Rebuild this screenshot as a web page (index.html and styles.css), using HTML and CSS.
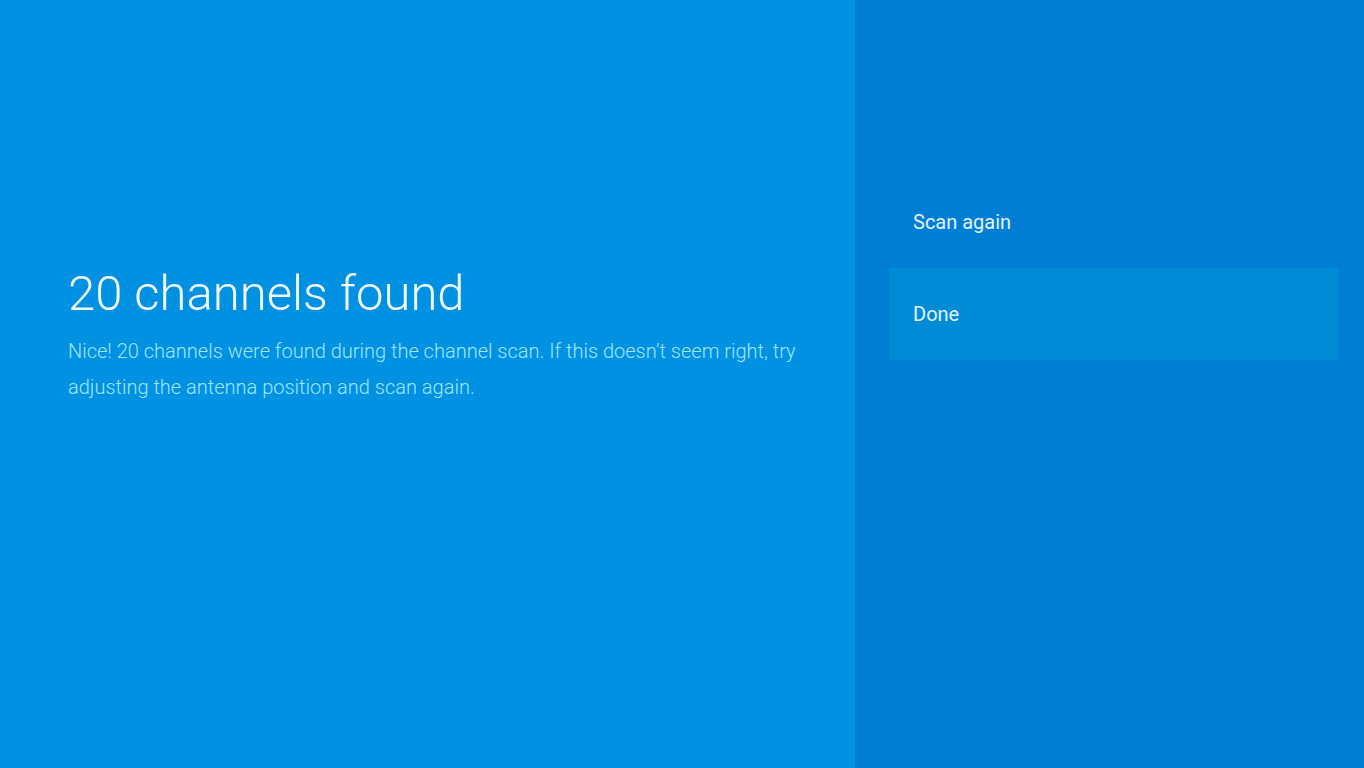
FILE: index.html
```html
<!DOCTYPE html>
<html lang="en">
<head>
<meta charset="utf-8">
<title>Channel scan</title>
<link rel="stylesheet" href="styles.css">
</head>
<body>
<div class="screen">
  <section class="info">
    <h1 class="title">20 channels found</h1>
    <p class="desc">Nice! 20 channels were found during the channel scan. If this doesn’t seem right, try adjusting the antenna position and scan again.</p>
  </section>
  <nav class="actions">
    <div class="action">Scan again</div>
    <div class="action focused">Done</div>
  </nav>
</div>
</body>
</html>
```

FILE: styles.css
```css
html, body {
  margin: 0;
  padding: 0;
  height: 100%;
}
body {
  font-family: Roboto, "Noto Sans", sans-serif;
  overflow: hidden;
}
.screen {
  display: flex;
  width: 1364px;
  height: 768px;
}
.info {
  width: 855px;
  flex: none;
  background: #0091e2;
  box-sizing: border-box;
  padding: 266px 40px 0 68px;
}
.title {
  margin: 0;
  font-size: 49px;
  font-weight: 300;
  line-height: 56px;
  color: #f2f8ff;
}
.desc {
  margin: 11px 0 0;
  font-size: 20px;
  font-weight: 300;
  line-height: 36px;
  color: #a2e6fc;
}
.actions {
  flex: 1;
  background: #007ed3;
  box-sizing: border-box;
  padding: 176px 25px 0 34px;
  display: flex;
  flex-direction: column;
}
.action {
  height: 92px;
  display: flex;
  align-items: center;
  padding-left: 24px;
  font-size: 20px;
  font-weight: 400;
  color: #e6f2fc;
  border-radius: 2px;
}
.action.focused {
  background: #008bd6;
}
```
